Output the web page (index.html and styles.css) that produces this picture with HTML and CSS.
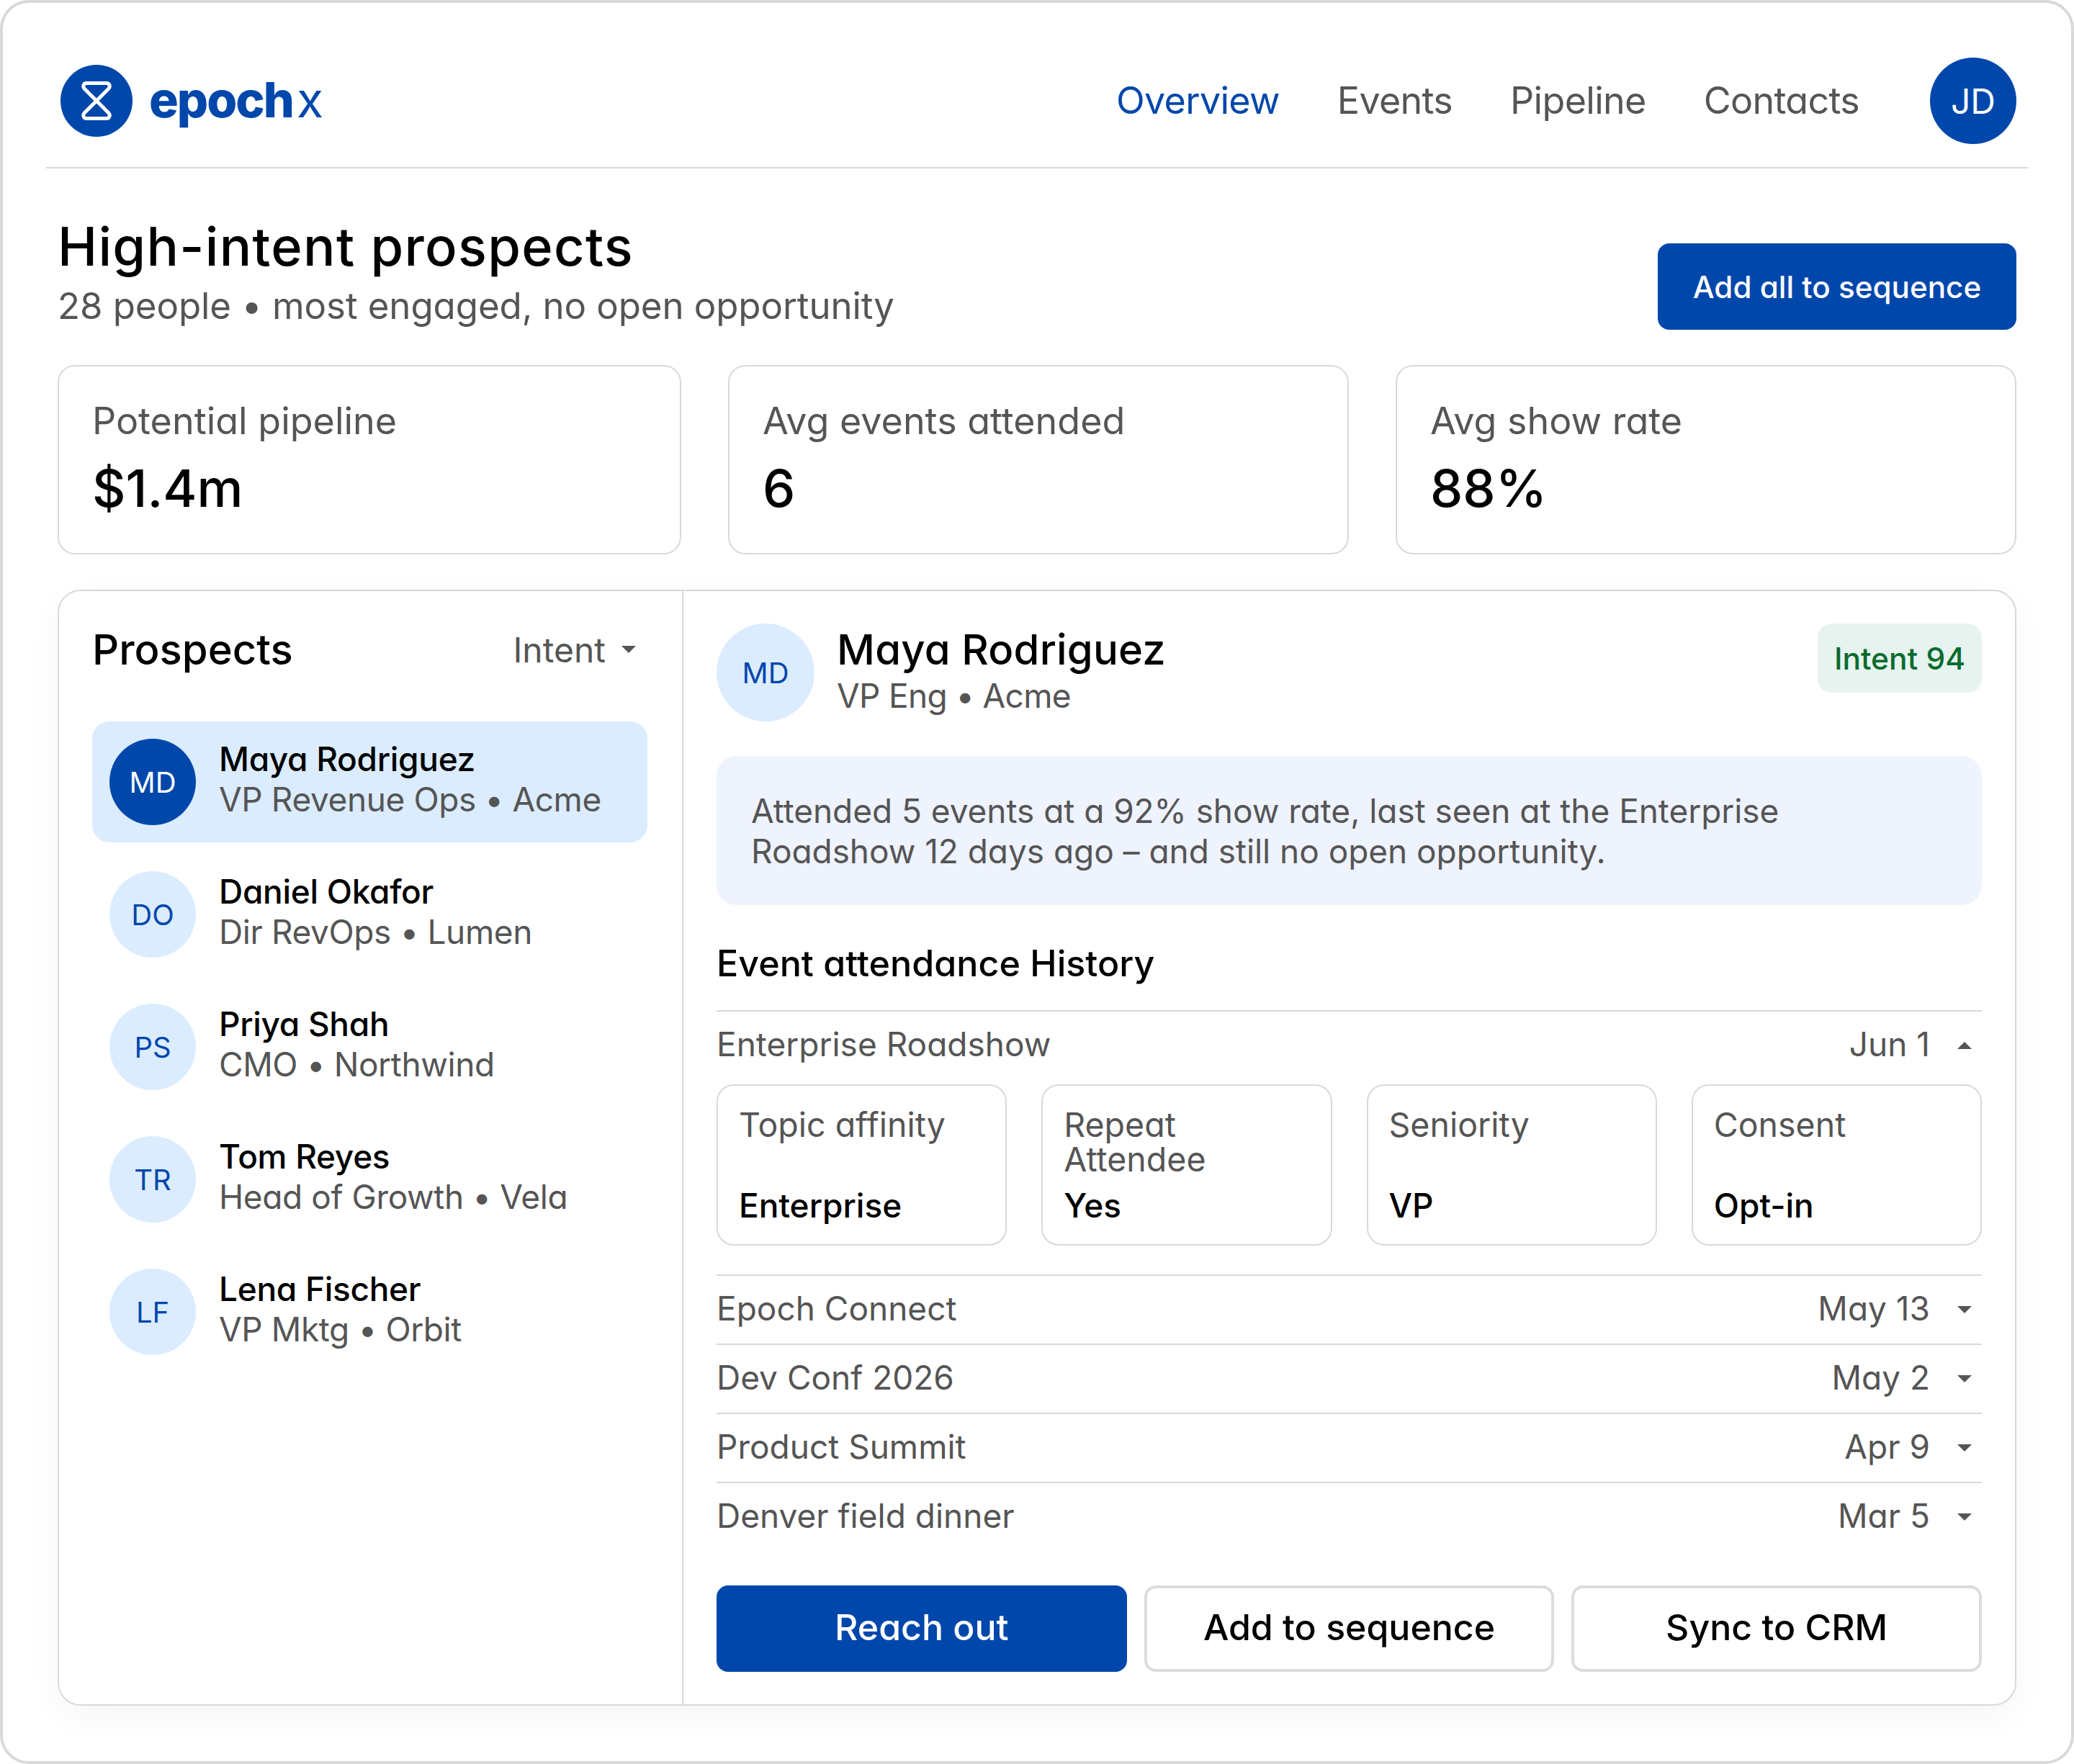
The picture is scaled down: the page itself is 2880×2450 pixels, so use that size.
FILE: index.html
```html
<!DOCTYPE html>
<html>
<head>
    <title>epochx - High-intent prospects</title>
    <link rel="stylesheet" href="styles.css">
</head>
<body>
    <div class="frame">
        <header class="topbar">
            <div class="brand">
                <span class="brand-mark">
                    <svg width="42" height="54" viewBox="0 0 42 54" fill="none" stroke="#fff" stroke-width="5" stroke-linejoin="round">
                        <path d="M7 2.500H35C39 2.500 40.500 7 38 10L21 27L38 44C40.500 47 39 51.500 35 51.500H7C3 51.500 1.500 47 4 44L21 27L4 10C1.500 7 3 2.500 7 2.500Z"/>
                    </svg>
                </span>
                <span class="brand-name">epoch<span class="brand-x">x</span></span>
            </div>
            <nav class="nav">
                <a class="nav-link active">Overview</a>
                <a class="nav-link">Events</a>
                <a class="nav-link">Pipeline</a>
                <a class="nav-link">Contacts</a>
            </nav>
            <div class="user-avatar">JD</div>
        </header>

        <section class="page-head">
            <div>
                <h1 class="page-title">High-intent prospects</h1>
                <p class="page-sub">28 people • most engaged, no open opportunity</p>
            </div>
            <button class="btn-add-all">Add all to sequence</button>
        </section>

        <section class="kpis">
            <div class="kpi">
                <div class="kpi-label">Potential pipeline</div>
                <div class="kpi-value">$1.4m</div>
            </div>
            <div class="kpi">
                <div class="kpi-label">Avg events attended</div>
                <div class="kpi-value">6</div>
            </div>
            <div class="kpi">
                <div class="kpi-label">Avg show rate</div>
                <div class="kpi-value">88%</div>
            </div>
        </section>

        <section class="panel">
            <aside class="prospects">
                <div class="prospects-head">
                    <h2 class="prospects-title">Prospects</h2>
                    <div class="sort">Intent <span class="caret"></span></div>
                </div>
                <div class="prospect selected">
                    <div class="avatar">MD</div>
                    <div class="prospect-text">
                        <div class="prospect-name">Maya Rodriguez</div>
                        <div class="prospect-role">VP Revenue Ops • Acme</div>
                    </div>
                </div>
                <div class="prospect">
                    <div class="avatar">DO</div>
                    <div class="prospect-text">
                        <div class="prospect-name">Daniel Okafor</div>
                        <div class="prospect-role">Dir RevOps • Lumen</div>
                    </div>
                </div>
                <div class="prospect">
                    <div class="avatar">PS</div>
                    <div class="prospect-text">
                        <div class="prospect-name">Priya Shah</div>
                        <div class="prospect-role">CMO • Northwind</div>
                    </div>
                </div>
                <div class="prospect">
                    <div class="avatar">TR</div>
                    <div class="prospect-text">
                        <div class="prospect-name">Tom Reyes</div>
                        <div class="prospect-role">Head of Growth • Vela</div>
                    </div>
                </div>
                <div class="prospect">
                    <div class="avatar">LF</div>
                    <div class="prospect-text">
                        <div class="prospect-name">Lena Fischer</div>
                        <div class="prospect-role">VP Mktg • Orbit</div>
                    </div>
                </div>
            </aside>

            <div class="detail">
                <div class="detail-head">
                    <div class="detail-avatar">MD</div>
                    <div class="detail-who">
                        <div class="detail-name">Maya Rodriguez</div>
                        <div class="detail-role">VP Eng • Acme</div>
                    </div>
                    <div class="badge">Intent 94</div>
                </div>

                <div class="insight">
                    Attended 5 events at a 92% show rate, last seen at the Enterprise<br>
                    Roadshow 12 days ago – and still no open opportunity.
                </div>

                <h3 class="history-title">Event attendance History</h3>

                <div class="event-row">
                    <span class="event-name">Enterprise Roadshow</span>
                    <span class="event-date">Jun 1</span>
                    <span class="caret up"></span>
                </div>
                <div class="chips">
                    <div class="chip">
                        <div class="chip-label">Topic affinity</div>
                        <div class="chip-value">Enterprise</div>
                    </div>
                    <div class="chip">
                        <div class="chip-label">Repeat<br>Attendee</div>
                        <div class="chip-value">Yes</div>
                    </div>
                    <div class="chip">
                        <div class="chip-label">Seniority</div>
                        <div class="chip-value">VP</div>
                    </div>
                    <div class="chip">
                        <div class="chip-label">Consent</div>
                        <div class="chip-value">Opt-in</div>
                    </div>
                </div>
                <div class="event-row">
                    <span class="event-name">Epoch Connect</span>
                    <span class="event-date">May 13</span>
                    <span class="caret"></span>
                </div>
                <div class="event-row">
                    <span class="event-name">Dev Conf 2026</span>
                    <span class="event-date">May 2</span>
                    <span class="caret"></span>
                </div>
                <div class="event-row">
                    <span class="event-name">Product Summit</span>
                    <span class="event-date">Apr 9</span>
                    <span class="caret"></span>
                </div>
                <div class="event-row">
                    <span class="event-name">Denver field dinner</span>
                    <span class="event-date">Mar 5</span>
                    <span class="caret"></span>
                </div>

                <div class="actions">
                    <button class="action primary">Reach out</button>
                    <button class="action">Add to sequence</button>
                    <button class="action">Sync to CRM</button>
                </div>
            </div>
        </section>
    </div>
</body>
</html>
```

FILE: styles.css
```css
* {
    box-sizing: border-box;
}

body {
    margin: 0;
    background: #fff;
    font-family: Inter, "Liberation Sans", sans-serif;
    font-feature-settings: "cv11";
    color: #000;
}

h1, h2, h3, p {
    margin: 0;
}

.frame {
    width: 2880px;
    height: 2450px;
    padding: 0 76px;
    border: 4px solid #d9d9d9;
    border-radius: 40px;
    background: #fff;
}

/* top bar */
.topbar {
    display: flex;
    align-items: center;
    height: 230px;
    margin: 0 -16px;
    padding: 76px 16px 32px;
    border-bottom: 2px solid #d9d9d9;
}

.brand {
    display: flex;
    align-items: center;
    gap: 23px;
    margin-left: 4px;
}

.brand-mark {
    display: flex;
    align-items: center;
    justify-content: center;
    width: 100px;
    height: 100px;
    border-radius: 50%;
    background: #0047ab;
}

.brand-name {
    padding-bottom: 4px;
    font-size: 68px;
    font-weight: 800;
    letter-spacing: -2px;
    color: #0047ab;
}

.brand-x {
    margin-left: 5px;
    font-weight: 400;
    letter-spacing: 0;
}

.nav {
    display: flex;
    gap: 80px;
    margin-left: auto;
    padding-bottom: 2px;
}

.nav-link {
    font-size: 52px;
    letter-spacing: -0.700px;
    color: #555;
}

.nav-link.active {
    color: #0047ab;
}

.user-avatar {
    display: flex;
    align-items: center;
    justify-content: center;
    width: 120px;
    height: 120px;
    margin-left: 98px;
    border-radius: 50%;
    background: #0047ab;
    color: #fff;
    font-size: 48px;
}

/* page heading */
.page-head {
    display: flex;
    align-items: flex-end;
    justify-content: space-between;
    height: 224px;
}

.page-title {
    margin-bottom: 8px;
    font-size: 74px;
    font-weight: 500;
    line-height: 84px;
    letter-spacing: 1.300px;
}

.page-sub {
    font-size: 51px;
    line-height: 66px;
    letter-spacing: -0.100px;
    color: #555;
}

.btn-add-all {
    width: 498px;
    height: 120px;
    border: 0;
    border-radius: 16px;
    background: #0047ab;
    color: #fff;
    font-family: inherit;
    font-feature-settings: inherit;
    font-size: 42.200px;
    font-weight: 500;
}

/* kpi cards */
.kpis {
    display: grid;
    grid-template-columns: 866px 862px 862px;
    gap: 65px;
    margin-top: 49px;
}

.kpi {
    height: 263px;
    padding: 44px 46px;
    border: 2px solid #d9d9d9;
    border-radius: 24px;
}

.kpi-label {
    font-size: 52px;
    line-height: 64px;
    color: #555;
}

.kpi-value {
    margin-top: 15px;
    font-size: 72px;
    font-weight: 500;
    line-height: 92px;
}

/* main panel */
.panel {
    display: grid;
    grid-template-columns: 867px 1fr;
    height: 1550px;
    margin-top: 49px;
    border: 2px solid #d9d9d9;
    border-radius: 32px;
    background: #fff;
    box-shadow: 0 16px 48px rgba(0, 0, 0, 0.04);
}

.prospects {
    padding: 46px 48px 46px 46px;
    border-right: 2px solid #d9d9d9;
}

.prospects-head {
    display: flex;
    align-items: center;
    justify-content: space-between;
    height: 70px;
    margin-bottom: 65px;
    padding-right: 16px;
}

.prospects-title {
    font-size: 58px;
    font-weight: 500;
}

.sort {
    display: flex;
    align-items: center;
    gap: 22px;
    font-size: 48px;
    color: #555;
}

.caret {
    width: 0;
    height: 0;
    border-left: 10px solid transparent;
    border-right: 10px solid transparent;
    border-top: 10px solid #555;
}

.caret.up {
    border-top: 0;
    border-bottom: 10px solid #555;
}

.prospect {
    display: flex;
    align-items: center;
    gap: 32px;
    height: 168px;
    margin-bottom: 16px;
    padding: 0 24px;
    border-radius: 24px;
}

.prospect.selected {
    background: #dbecff;
}

.prospect-text {
    padding-bottom: 8px;
}

.avatar {
    display: flex;
    align-items: center;
    justify-content: center;
    flex: none;
    width: 120px;
    height: 120px;
    border-radius: 50%;
    background: #dbecff;
    color: #0047ab;
    font-size: 40px;
}

.selected .avatar {
    background: #0047ab;
    color: #fff;
}

.prospect-name {
    font-size: 46px;
    font-weight: 500;
    line-height: 56px;
    letter-spacing: -0.300px;
}

.prospect-role {
    font-size: 46px;
    line-height: 56px;
    letter-spacing: -0.400px;
    color: #555;
}

/* detail pane */
.detail {
    padding: 45px 46px 0 46px;
}

.detail-head {
    display: flex;
    align-items: flex-start;
    gap: 31px;
    height: 137px;
}

.detail-avatar {
    display: flex;
    align-items: center;
    justify-content: center;
    width: 136px;
    height: 136px;
    border-radius: 50%;
    background: #dbecff;
    color: #0047ab;
    font-size: 40px;
}

.detail-who {
    flex: 1;
}

.detail-name {
    font-size: 58px;
    font-weight: 500;
    line-height: 72px;
    letter-spacing: 0.200px;
}

.detail-role {
    font-size: 46px;
    line-height: 56px;
    letter-spacing: -0.700px;
    color: #555;
}

.badge {
    display: flex;
    align-items: center;
    justify-content: center;
    width: 228px;
    height: 96px;
    border-radius: 20px;
    background: #e6f3ee;
    color: #0a6b2e;
    font-size: 42.500px;
    font-weight: 500;
}

.insight {
    height: 207px;
    margin-top: 47px;
    padding: 48px;
    border-radius: 28px;
    background: #eef3fe;
    font-size: 46px;
    line-height: 56px;
    letter-spacing: -0.050px;
    color: #555;
}

.history-title {
    margin-top: 46px;
    height: 100px;
    font-size: 50.200px;
    font-weight: 500;
    line-height: 70px;
}

.event-row {
    display: flex;
    align-items: center;
    height: 96px;
    padding: 0 14px 4px 0;
    border-top: 2px solid #d9d9d9;
    font-size: 46px;
    color: #555;
}

.event-name {
    flex: 1;
}

.event-date {
    margin-right: 38px;
}

.event-row .caret {
    margin-top: 4px;
}

.chips {
    display: grid;
    grid-template-columns: repeat(4, 1fr);
    gap: 48px;
    height: 224px;
    margin: 7px 0 40px;
}

.chip {
    display: flex;
    flex-direction: column;
    justify-content: space-between;
    padding: 30px 29px 24px;
    border: 2px solid #d9d9d9;
    border-radius: 24px;
}

.chip-label {
    font-size: 46.500px;
    line-height: 48px;
    color: #555;
}

.chip-value {
    font-size: 46px;
    line-height: 60px;
    font-weight: 450;
}

.actions {
    display: grid;
    grid-template-columns: repeat(3, 1fr);
    gap: 24px;
    margin-top: 48px;
}

.action {
    height: 120px;
    padding-bottom: 6px;
    border: 4px solid #dcdcdc;
    border-radius: 16px;
    background: #fff;
    color: #000;
    font-family: inherit;
    font-feature-settings: inherit;
    font-size: 50px;
    font-weight: 500;
}

.action.primary {
    border: 0;
    background: #0047ab;
    color: #fff;
}
```
